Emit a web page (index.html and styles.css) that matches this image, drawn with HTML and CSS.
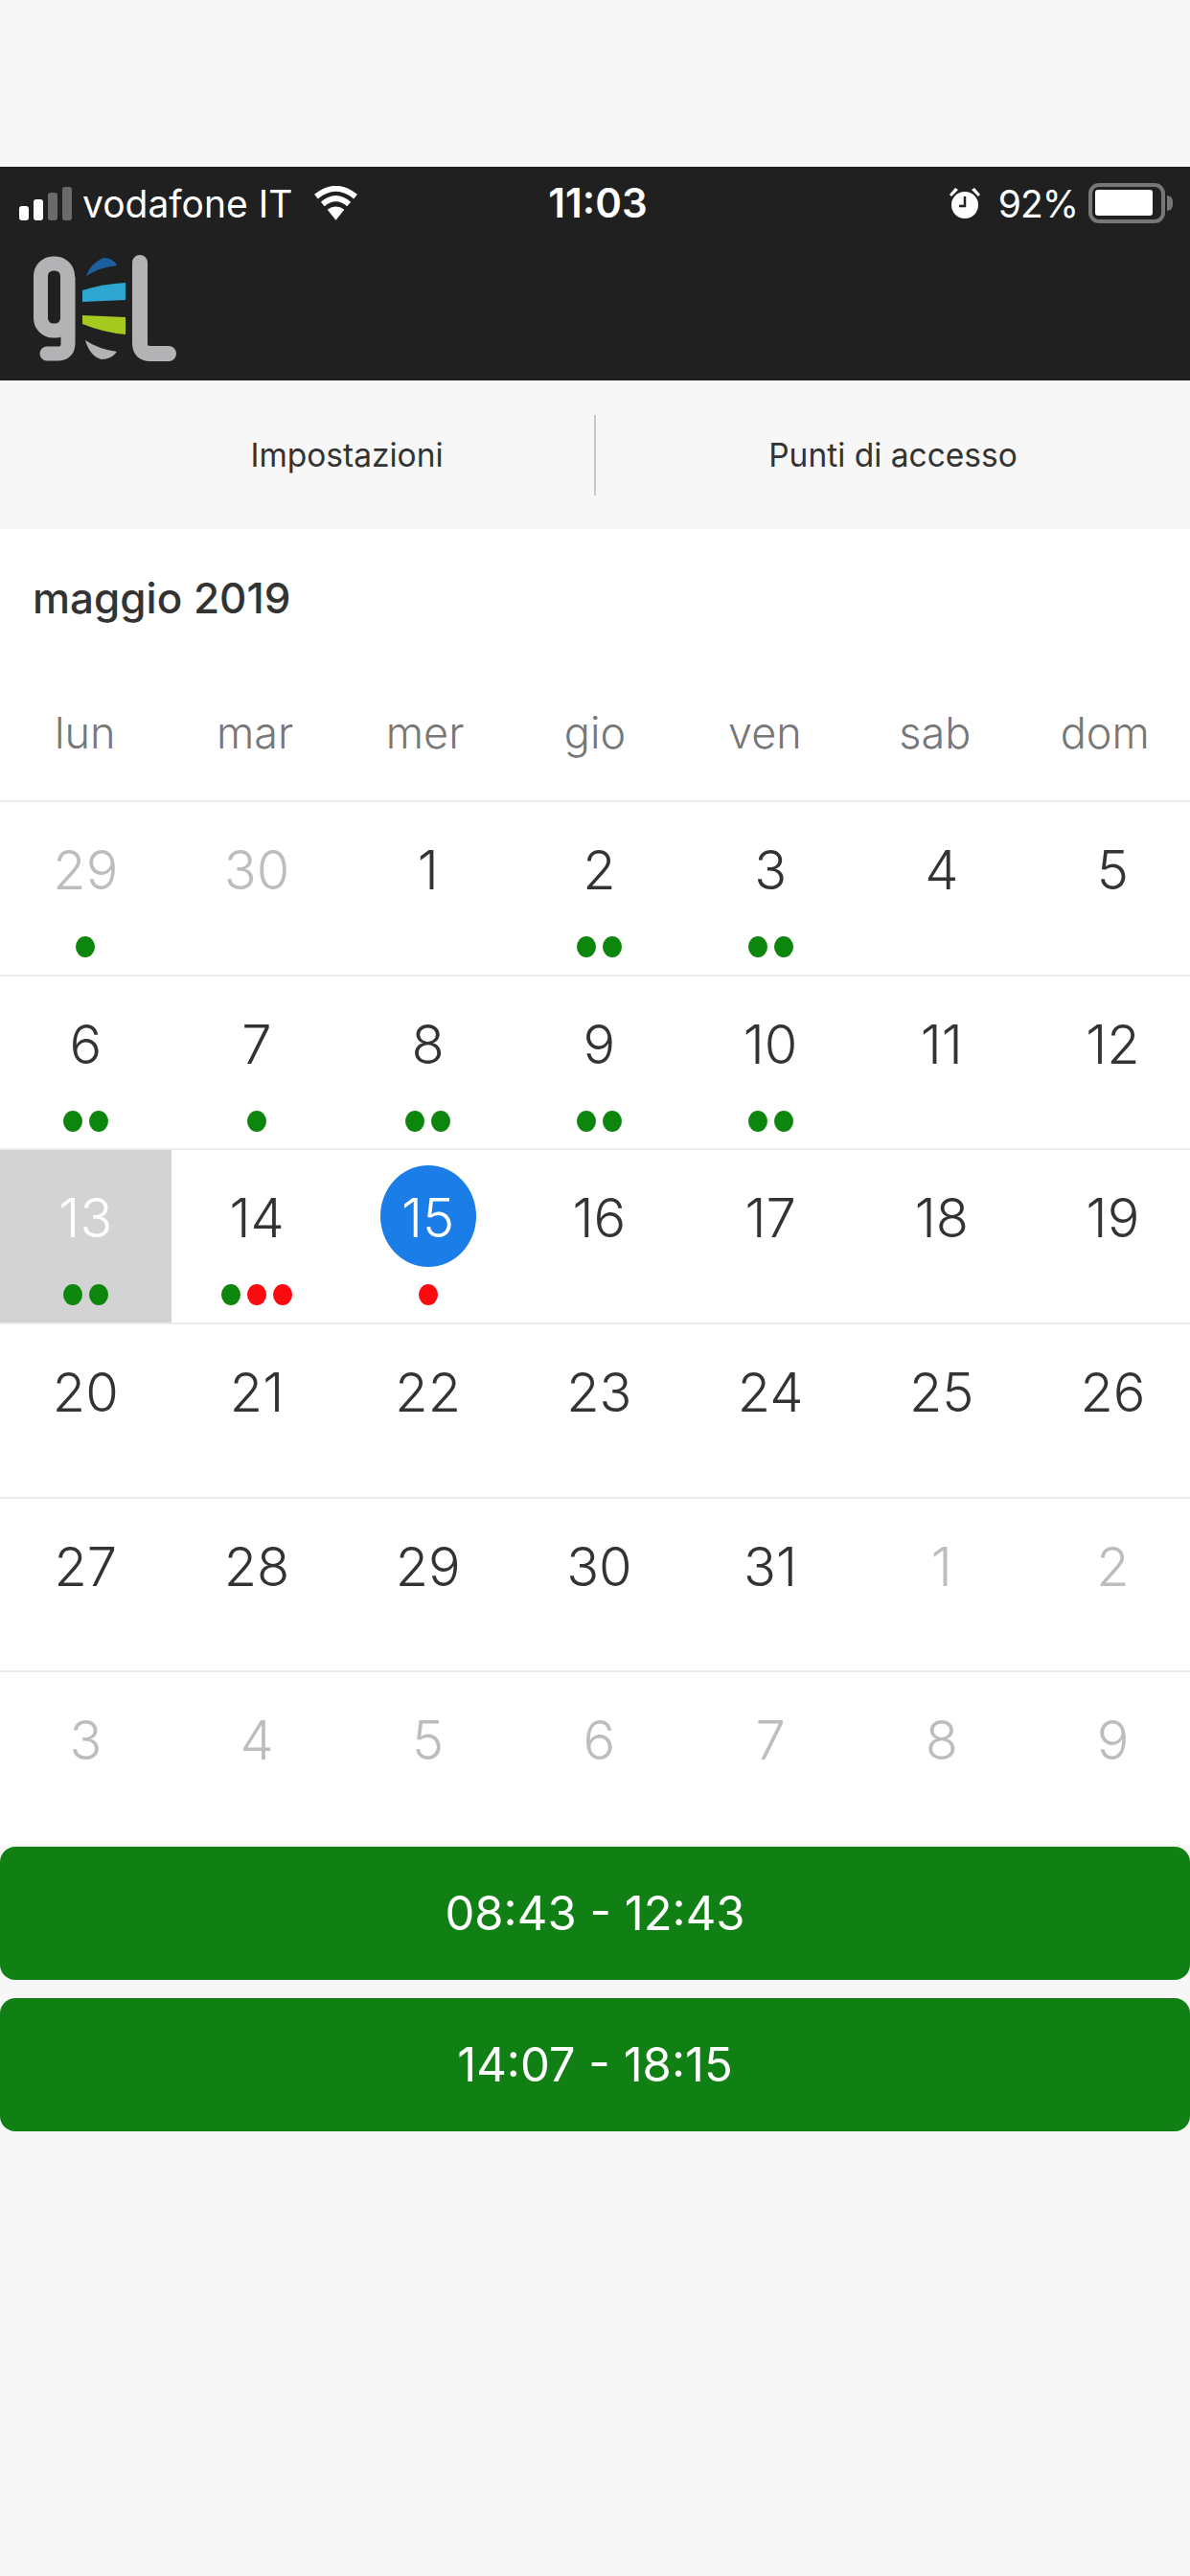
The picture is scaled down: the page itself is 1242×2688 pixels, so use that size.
FILE: index.html
```html
<!DOCTYPE html>
<html>
<head>
  <meta charset="UTF-8">
  <title>Calendario</title>
  <link rel="stylesheet" href="styles.css">
</head>
<body>

  <div class="top-gap"></div>

  <div class="header">
    <div class="status">
      <div class="status-left">
        <div class="signal">
          <span class="bar b1"></span><span class="bar b2"></span><span class="bar b3 off"></span><span class="bar b4 off"></span>
        </div>
        <span class="carrier">vodafone IT</span>
        <svg class="wifi" width="47" height="36" viewBox="0 0 48 36">
          <path d="M24 36 L15 25 Q24 18 33 25 Z" fill="#fff"/>
          <path d="M10 19 Q24 7 38 19" fill="none" stroke="#fff" stroke-width="6"/>
          <path d="M3 11 Q24 -6 45 11" fill="none" stroke="#fff" stroke-width="6"/>
        </svg>
      </div>
      <div class="clock">11:03</div>
      <div class="status-right">
        <svg class="alarm" width="34" height="34" viewBox="0 0 34 34">
          <circle cx="17" cy="19" r="14" fill="#fff"/>
          <path d="M17 10 V20 H11" fill="none" stroke="#222" stroke-width="2.5"/>
          <path d="M1 8 L7 1 L10 3 L3 10 Z M33 8 L27 1 L24 3 L31 10 Z" fill="#fff"/>
        </svg>
        <span class="percent">92%</span>
        <div class="battery"><div class="charge"></div></div>
        <div class="nub"></div>
      </div>
    </div>
    <svg class="logo" width="160" height="116" viewBox="30 265 160 116">
      <rect x="42.5" y="275" width="28" height="70" rx="13" fill="none" stroke="#b3b3b5" stroke-width="15"/>
      <path d="M71 290 V358 Q71 369 60 369 H49" fill="none" stroke="#b3b3b5" stroke-width="15" stroke-linecap="round"/>
      <path d="M146 274 V358 Q146 369 157 369 H176" fill="none" stroke="#b3b3b5" stroke-width="16" stroke-linecap="round"/>
      <path d="M90 288 Q94 275 108 269 Q118 269 122 277 Q104 279 90 288 Z" fill="#1c5f9c"/>
      <path d="M86 303 Q108 296 131 295 V313 L86 315 Z" fill="#2ea6d2"/>
      <path d="M86 329 L131 331 V349 Q108 347 86 338 Z" fill="#a6c91f"/>
      <path d="M89 355 Q102 364 122 367 Q116 375 106 375 Q94 372 89 355 Z" fill="#b3b3b5"/>
    </svg>
  </div>

  <div class="nav">
    <div class="nav-item nav-first">Impostazioni</div>
    <div class="nav-line"></div>
    <div class="nav-item">Punti di accesso</div>
  </div>

  <div class="calendar">
    <div class="month">maggio 2019</div>
    <div class="days">
      <div>lun</div><div>mar</div><div>mer</div><div>gio</div><div>ven</div><div>sab</div><div>dom</div>
    </div>

    <div class="week">
      <div class="cell muted"><div class="num">29</div><div class="dots"><i class="g"></i></div></div>
      <div class="cell muted"><div class="num">30</div><div class="dots"></div></div>
      <div class="cell"><div class="num">1</div><div class="dots"></div></div>
      <div class="cell"><div class="num">2</div><div class="dots"><i class="g"></i><i class="g"></i></div></div>
      <div class="cell"><div class="num">3</div><div class="dots"><i class="g"></i><i class="g"></i></div></div>
      <div class="cell"><div class="num">4</div><div class="dots"></div></div>
      <div class="cell"><div class="num">5</div><div class="dots"></div></div>
    </div>

    <div class="week">
      <div class="cell"><div class="num">6</div><div class="dots"><i class="g"></i><i class="g"></i></div></div>
      <div class="cell"><div class="num">7</div><div class="dots"><i class="g"></i></div></div>
      <div class="cell"><div class="num">8</div><div class="dots"><i class="g"></i><i class="g"></i></div></div>
      <div class="cell"><div class="num">9</div><div class="dots"><i class="g"></i><i class="g"></i></div></div>
      <div class="cell"><div class="num">10</div><div class="dots"><i class="g"></i><i class="g"></i></div></div>
      <div class="cell"><div class="num">11</div><div class="dots"></div></div>
      <div class="cell"><div class="num">12</div><div class="dots"></div></div>
    </div>

    <div class="week">
      <div class="cell today"><div class="num">13</div><div class="dots"><i class="g"></i><i class="g"></i></div></div>
      <div class="cell"><div class="num">14</div><div class="dots"><i class="g"></i><i class="r"></i><i class="r"></i></div></div>
      <div class="cell picked"><div class="num">15</div><div class="dots"><i class="r"></i></div></div>
      <div class="cell"><div class="num">16</div><div class="dots"></div></div>
      <div class="cell"><div class="num">17</div><div class="dots"></div></div>
      <div class="cell"><div class="num">18</div><div class="dots"></div></div>
      <div class="cell"><div class="num">19</div><div class="dots"></div></div>
    </div>

    <div class="week">
      <div class="cell"><div class="num">20</div><div class="dots"></div></div>
      <div class="cell"><div class="num">21</div><div class="dots"></div></div>
      <div class="cell"><div class="num">22</div><div class="dots"></div></div>
      <div class="cell"><div class="num">23</div><div class="dots"></div></div>
      <div class="cell"><div class="num">24</div><div class="dots"></div></div>
      <div class="cell"><div class="num">25</div><div class="dots"></div></div>
      <div class="cell"><div class="num">26</div><div class="dots"></div></div>
    </div>

    <div class="week">
      <div class="cell"><div class="num">27</div><div class="dots"></div></div>
      <div class="cell"><div class="num">28</div><div class="dots"></div></div>
      <div class="cell"><div class="num">29</div><div class="dots"></div></div>
      <div class="cell"><div class="num">30</div><div class="dots"></div></div>
      <div class="cell"><div class="num">31</div><div class="dots"></div></div>
      <div class="cell muted"><div class="num">1</div><div class="dots"></div></div>
      <div class="cell muted"><div class="num">2</div><div class="dots"></div></div>
    </div>

    <div class="week">
      <div class="cell muted"><div class="num">3</div><div class="dots"></div></div>
      <div class="cell muted"><div class="num">4</div><div class="dots"></div></div>
      <div class="cell muted"><div class="num">5</div><div class="dots"></div></div>
      <div class="cell muted"><div class="num">6</div><div class="dots"></div></div>
      <div class="cell muted"><div class="num">7</div><div class="dots"></div></div>
      <div class="cell muted"><div class="num">8</div><div class="dots"></div></div>
      <div class="cell muted"><div class="num">9</div><div class="dots"></div></div>
    </div>
  </div>

  <div class="slots">
    <div class="slot">08:43 - 12:43</div>
    <div class="slot">14:07 - 18:15</div>
  </div>

</body>
</html>
```

FILE: styles.css
```css
html, body { margin:0; padding:0; }
body { width:1242px; height:2688px; overflow:hidden; background:#f7f7f7; font-family:"Inter", "Liberation Sans", sans-serif; color:#333; }

.top-gap { height:174px; }

.header { height:223px; background:#202020; box-sizing:border-box; padding-top:14px; }
.status { display:flex; align-items:center; height:48px; padding:0 20px; color:#fff; position:relative; }
.status-left { display:flex; align-items:center; }
.signal { display:flex; align-items:flex-end; gap:5px; height:35px; }
.bar { display:block; width:10px; background:#fff; border-radius:3px; }
.b1 { height:15px; }
.b2 { height:22px; }
.b3 { height:29px; }
.b4 { height:35px; }
.off { background:#6a6a6a; }
.carrier { font-size:39px; margin-left:11px; white-space:nowrap; }
.wifi { margin-left:22px; }
.clock { position:absolute; left:0; right:0; top:0; line-height:48px; text-align:center; font-size:42px; font-weight:600; padding-left:6px; }
.status-right { display:flex; align-items:center; position:absolute; right:18px; top:0; height:48px; }
.alarm { margin-right:18px; }
.percent { font-size:39px; letter-spacing:-1px; margin-right:11px; }
.battery { width:80px; height:42px; box-sizing:border-box; border:4px solid #777; border-radius:11px; padding:3px 9px 4px 3px; }
.charge { height:100%; background:#fff; border-radius:3px; }
.nub { width:6px; height:16px; background:#777; border-radius:0 6px 6px 0; margin-left:2px; }

.logo { display:block; margin:29px 0 0 30px; }

.nav { display:flex; align-items:center; height:155px; background:#f7f7f7; }
.nav-item { flex:1; text-align:center; font-size:33.5px; color:#333; box-sizing:border-box; }
.nav-first { padding-left:104px; flex:none; width:620px; }
.nav-line { width:2px; height:84px; background:#c8c8c8; }

.calendar { background:#fff; height:1373px; }
.month { font-size:44px; font-weight:500; color:#333; padding:47px 0 0 34px; height:103px; line-height:50px; }
.days { display:grid; grid-template-columns:repeat(7, 1fr); height:133px; font-size:45px; font-weight:300; color:#777; text-align:center; padding-top:32px; box-sizing:border-box; line-height:62px; }

.week { display:grid; grid-template-columns:repeat(7, 178.7px); height:181.7px; box-sizing:border-box; border-top:2px solid #ececec; }
.cell { display:flex; flex-direction:column; align-items:center; padding-top:16px; box-sizing:border-box; }
.num { width:100px; height:106px; border-radius:50%; display:flex; align-items:center; justify-content:center; box-sizing:border-box; padding-top:4px; font-size:56px; font-weight:300; color:#333; }
.dots { display:flex; justify-content:center; gap:7px; height:22px; margin-top:18px; }
.dots i { display:block; width:20px; height:22px; border-radius:50%; }
.g { background:#0d860d; }
.r { background:#fb0a10; }
.muted .num { color:#bdbdbd; }
.today { background:#d3d3d3; }
.today .num { color:#fff; }
.picked .num { background:#1a7de8; color:#fff; }

.slots { display:flex; flex-direction:column; gap:19px; padding-top:2px; }
.slot { height:139px; background:#107f14; border-radius:16px; color:#fff; font-size:49px; display:flex; align-items:center; justify-content:center; }
```
